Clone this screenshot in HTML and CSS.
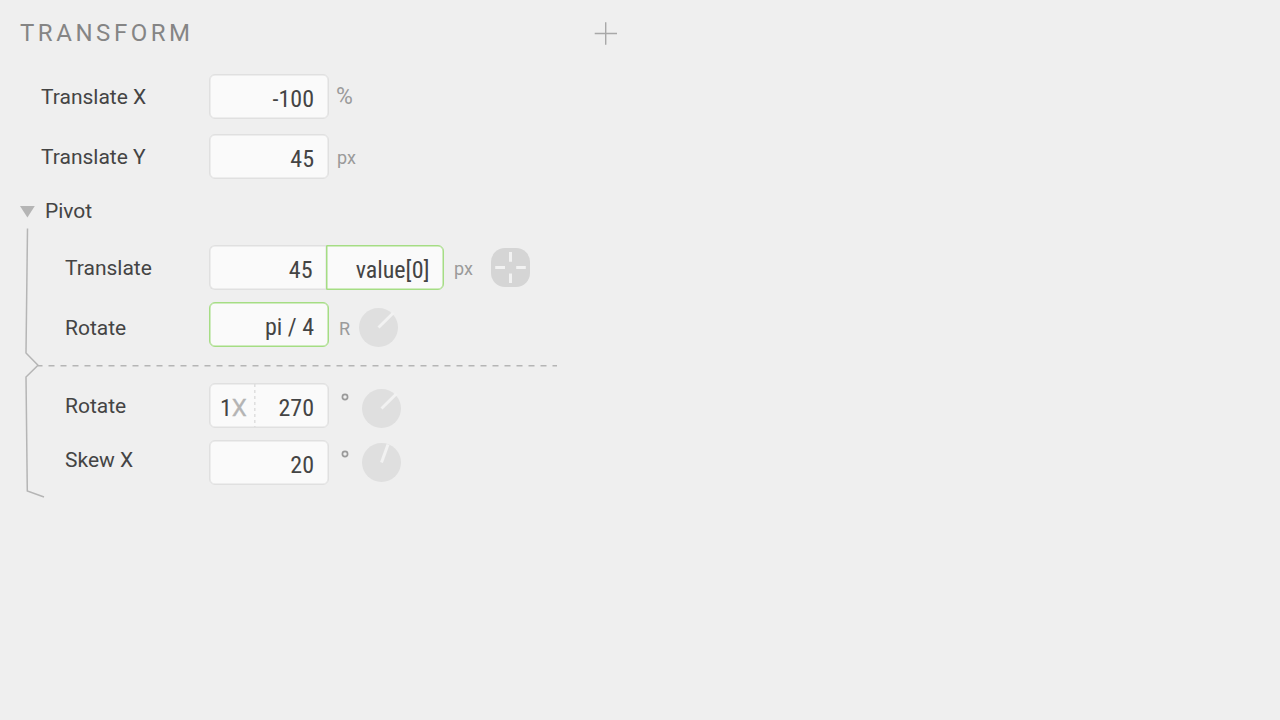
FILE: index.html
```html
<!DOCTYPE html>
<html lang="en">
<head>
<meta charset="utf-8">
<title>Transform</title>
<link rel="stylesheet" href="styles.css">
</head>
<body>
<main class="panel">
  <header class="header">
    <h1 class="title">TRANSFORM</h1>
    <svg class="add" width="24" height="24" viewBox="0 0 24 24"><path d="M.7 12.500H23M11.700 1.200V23.700"/></svg>
  </header>
  <section class="rows">
    <div class="row">
      <span class="label">Translate X</span>
      <span class="field"><span class="value">-100</span></span>
      <span class="unit percent">%</span>
    </div>
    <div class="row">
      <span class="label">Translate Y</span>
      <span class="field"><span class="value">45</span></span>
      <span class="unit px">px</span>
    </div>
  </section>
  <section class="pivot">
    <h2 class="pivot-head"><svg class="caret" width="15" height="13" viewBox="0 0 15 13"><path d="M0 1H14.800L7.400 12.500Z"/></svg><span class="pivot-name">Pivot</span></h2>
    <svg class="bracket" width="560" height="280" viewBox="0 222 560 280">
      <path d="M27.500 228.500L26 353L38 365.200L26 377L27.300 491L44 497"/>
      <path class="dashes" d="M38 365.700H557"/>
    </svg>
    <div class="row sub translate">
      <span class="label">Translate</span>
      <span class="field first"><span class="value">45</span></span>
      <span class="field last expr"><span class="value">value[0]</span></span>
      <span class="unit px pair">px</span>
      <svg class="target" width="39" height="39" viewBox="0 0 39 39"><rect width="39" height="39" rx="14"/><path d="M19.500 4V13.800M19.500 25.500V35M4.200 19.500H14M25.200 19.500H34.800"/></svg>
    </div>
    <div class="row sub rotate">
      <span class="label low">Rotate</span>
      <span class="field expr"><span class="value">pi / 4</span></span>
      <span class="unit radians">R</span>
      <svg class="dial dial-r" width="39" height="39" viewBox="0 0 39 39"><circle cx="19.500" cy="19.500" r="19.500"/><path d="M19.500 19.500L34.500 4.800"/></svg>
    </div>
    <div class="row sub rotate-after">
      <span class="label">Rotate</span>
      <span class="field turns"><span class="count">1<span class="times">X</span></span><svg class="divider" width="2" height="43" viewBox="0 0 2 43"><path d="M.8 0V43"/></svg><span class="value">270</span></span>
      <svg class="degree" width="8" height="8" viewBox="0 0 8 8"><circle cx="4" cy="4" r="2.600"/></svg>
      <svg class="dial" width="39" height="39" viewBox="0 0 39 39"><circle cx="19.500" cy="19.500" r="19.500"/><path d="M19.500 19.500L34.500 4.800"/></svg>
    </div>
    <div class="row sub skew">
      <span class="label high">Skew X</span>
      <span class="field"><span class="value">20</span></span>
      <svg class="degree" width="8" height="8" viewBox="0 0 8 8"><circle cx="4" cy="4" r="2.600"/></svg>
      <svg class="dial dial-low" width="39" height="39" viewBox="0 0 39 39"><circle cx="19.500" cy="19.500" r="19.500"/><path d="M19.500 19.500L26 1.500"/></svg>
    </div>
  </section>
</main>
</body>
</html>
```
FILE: styles.css
```css
* { box-sizing: border-box; }
body {
  margin: 0;
  background: #efefef;
  color: #444;
  font-family: Roboto, "Liberation Sans", sans-serif;
}
.panel { width: 640px; height: 720px; padding-top: 16px; }
.header {
  display: flex;
  justify-content: space-between;
  height: 58px;
  padding: 0 22px 0 20px;
}
.title {
  margin: 0;
  font-size: 24px;
  line-height: 34px;
  font-weight: 400;
  letter-spacing: 3.550px;
  color: #858585;
}
.add { margin-top: 5px; fill: none; stroke: #a8a8a8; stroke-width: 1.4; }
.rows { display: flex; flex-direction: column; gap: 15px; }
.row { display: flex; height: 45px; padding-left: 41px; }
.label { width: 168px; font-size: 21px; line-height: 46px; white-space: nowrap; }
.sub { padding-left: 65px; }
.sub .label { width: 144px; }
.label.low { padding-top: 3px; }
.label.high { line-height: 40px; }
.field {
  --edge: #e0e0e0;
  display: flex;
  justify-content: flex-end;
  width: 120px;
  height: 45px;
  padding-right: 14px;
  border: 1px solid var(--edge);
  border-radius: 6px;
  box-shadow: inset 0 0 0 .5px var(--edge);
  background: #fafafa;
}
.value, .count {
  font-family: "Roboto Condensed", Roboto, sans-serif;
  font-stretch: condensed;
  font-size: 24px;
  line-height: 48px;
  white-space: pre;
}
.expr { --edge: #a5dd84; }
.first { width: 117px; padding-right: 13.500px; border-right: 0; border-radius: 6px 0 0 6px; }
.last { width: 118px; padding-right: 13.500px; border-radius: 0 6px 6px 0; }
.unit { color: #9a9a9a; font-size: 18px; line-height: 48px; }
.percent { margin-left: 7px; font-size: 23px; line-height: 46px; }
.px { margin-left: 8px; }
.pair { width: 37px; margin-left: 10px; }
.radians { width: 20px; margin-left: 10px; line-height: 53px; }
.turns { padding-left: 10px; }
.count { width: 34px; }
.times { font-family: Roboto, sans-serif; font-stretch: normal; color: #b4b4b4; -webkit-text-stroke: .3px #b4b4b4; }
.divider { margin-right: auto; stroke: #dcdcdc; stroke-width: 1.4; stroke-dasharray: 3 3; }
.pivot { position: relative; height: 330px; padding-top: 19px; }
.pivot-head {
  display: flex;
  align-items: center;
  gap: 10px;
  height: 26px;
  margin: 0;
  padding-left: 20px;
  font-size: 21px;
  font-weight: 400;
}
.caret { fill: #b5b5b5; }
.bracket {
  position: absolute;
  left: 0;
  top: 43px;
  fill: none;
  stroke: #b5b5b5;
  stroke-width: 1.5;
}
.dashes { stroke-dasharray: 6 6; stroke-dashoffset: 1.5; }
.translate { margin-top: 21px; }
.rotate { margin-top: 12px; }
.rotate-after { margin-top: 36px; }
.skew { margin-top: 12px; }
.target { margin-top: 3px; fill: #d5d5d5; }
.target path, .dial path { stroke: #f2f2f2; stroke-width: 3; fill: none; }
.dial { margin: 6px 0 0 13px; fill: #dfdfdf; }
.dial path { stroke-width: 3; }
.dial-r { margin-left: 0; }
.dial-low { margin-top: 3px; }
.degree { margin: 10px 0 0 12px; fill: none; stroke: #9a9a9a; stroke-width: 1.700; }
```
